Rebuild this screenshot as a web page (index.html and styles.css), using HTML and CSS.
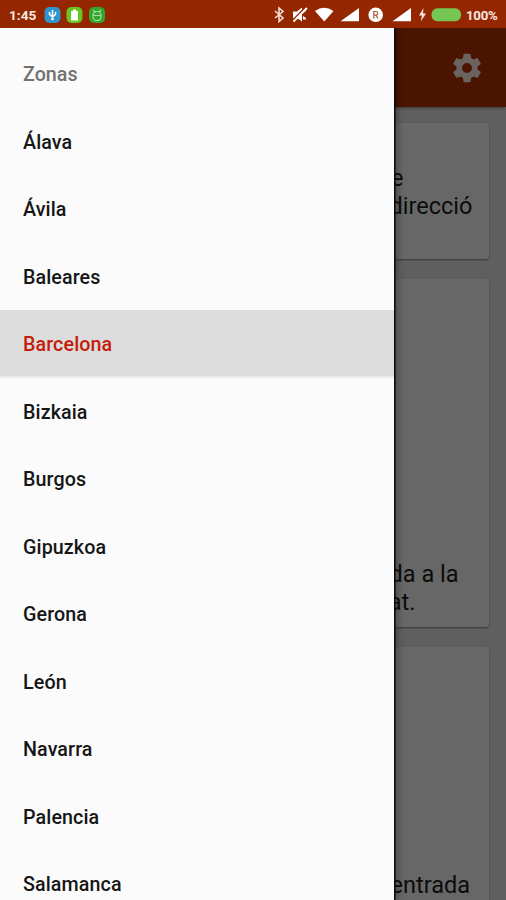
FILE: index.html
```html
<!DOCTYPE html>
<html lang="es">
<head>
<meta charset="utf-8">
<title>Zonas</title>
<link rel="stylesheet" href="styles.css">
</head>
<body>
<div class="screen">
  <header class="status">
    <span class="clock">1:45</span>
    <svg class="status-icons-left" width="64" height="18" viewBox="0 0 64 18">
      <rect x="0.5" y="1" width="16" height="16" rx="5" fill="#3095cf"/>
      <path d="M8.500 4v10M5.500 6v2.500l3 2.500 3-2.500V6" stroke="#fff" stroke-width="1.500" fill="none"/>
      <circle cx="8.500" cy="13" r="1.300" fill="#fff"/>
      <rect x="22.500" y="1" width="16" height="16" rx="5" fill="#69c522"/>
      <path d="M27 5h2V3.500h3V5h2v9.500h-7z" fill="#fff"/>
      <rect x="45" y="1" width="16" height="16" rx="5" fill="#30a82d"/>
      <path d="M49 4l2 2M57 4l-2 2M49 9.500a4 4 0 0 1 8 0v1.500a4 3.500 0 0 1-8 0zM49 9.500h8" stroke="#a9dca0" stroke-width="1.200" fill="none"/>
    </svg>
    <svg class="status-icons-right" width="190" height="18" viewBox="272 6 190 18">
      <path d="M275 11l8 7-4 3.500V8l4 3.500-8 6.500" stroke="#f4ded5" stroke-width="1.600" fill="none"/>
      <path d="M293 11.500h4l5-4v14l-5-3.500h-4zM303 10l3-2v3l-3 2zM303 16l3 2v1.500h-3z" fill="#fff"/>
      <path d="M292.500 20.500L305 7.500" stroke="#952700" stroke-width="1.500"/>
      <path d="M293.500 21.500L307 8" stroke="#fff" stroke-width="1.800"/>
      <path d="M315 11q9-6.500 18.500 0L324.300 21.500z" fill="#fff"/>
      <path d="M340.500 21.300L359 8v13.300z" fill="#fff"/>
      <circle cx="375.700" cy="14.800" r="7.300" fill="#fff"/>
      <path d="M373.800 18.500v-7h2.200a1.800 1.800 0 0 1 0 3.700h-2.200M376 15.200l2 3.300" stroke="#a8563a" stroke-width="1.200" fill="none"/>
      <path d="M392.500 21.300L411 8v13.300z" fill="#fff"/>
      <path d="M423.500 8l-4.500 7.500h3l-1.300 6 5.300-8h-3z" fill="#f8e5dd"/>
      <rect x="431.500" y="8.300" width="29.500" height="13" rx="6" fill="#76c654"/>
    </svg>
    <span class="percent">100%</span>
  </header>
  <div class="stage">
    <div class="page">
      <div class="toolbar">
        <svg width="34" height="34" viewBox="0 0 24 24" fill="#6b6360"><path d="M19.430 12.980c.04-.32.07-.64.07-.98s-.03-.66-.07-.98l2.110-1.650c.19-.15.24-.42.12-.64l-2-3.460c-.12-.22-.39-.3-.61-.22l-2.490 1c-.52-.4-1.080-.73-1.690-.98l-.38-2.650A.488.488 0 0 0 14 2h-4c-.25 0-.46.18-.49.42l-.38 2.650c-.61.25-1.170.59-1.690.98l-2.490-1c-.23-.09-.49 0-.61.22l-2 3.460c-.13.22-.07.49.12.64l2.110 1.650c-.04.32-.07.65-.07.98s.03.66.07.98l-2.110 1.650c-.19.15-.24.42-.12.64l2 3.460c.12.22.39.3.61.22l2.490-1c.52.4 1.080.73 1.690.98l.38 2.650c.03.24.24.42.49.42h4c.25 0 .46-.18.49-.42l.38-2.650c.61-.25 1.170-.59 1.690-.98l2.490 1c.23.09.49 0 .61-.22l2-3.460c.12-.22.07-.49-.12-.64l-2.110-1.650zM12 15.500c-1.930 0-3.500-1.570-3.500-3.500s1.570-3.500 3.500-3.500 3.500 1.570 3.500 3.500-1.570 3.500-3.500 3.500z"/></svg>
      </div>
      <div class="cards">
        <article class="card first"><p class="line narrow">e</p><p class="line">direcció</p></article>
        <article class="card second"><p class="line a-la">da a la</p><p class="line at">at.</p></article>
        <article class="card third"><p class="line entry">entrada</p></article>
      </div>
    </div>
    <nav class="drawer">
      <div class="row heading">Zonas</div>
      <div class="row">Álava</div>
      <div class="row">Ávila</div>
      <div class="row">Baleares</div>
      <div class="row selected">Barcelona</div>
      <div class="row">Bizkaia</div>
      <div class="row">Burgos</div>
      <div class="row">Gipuzkoa</div>
      <div class="row">Gerona</div>
      <div class="row">León</div>
      <div class="row">Navarra</div>
      <div class="row">Palencia</div>
      <div class="row">Salamanca</div>
    </nav>
  </div>
</div>
</body>
</html>
```
FILE: styles.css
```css
* { box-sizing: border-box; }
body { margin: 0; font-family: Roboto, sans-serif; }
.screen { width: 506px; height: 900px; overflow: hidden; display: flex; flex-direction: column; }
.status {
  height: 28px; flex: none; display: flex; align-items: center;
  padding: 2px 8px 0 9px; background: #952700; color: #fbe9e2;
  font-size: 13.7px; font-weight: 700; white-space: nowrap;
}
.status svg { flex: none; }
.clock { width: 35px; flex: none; }
.status-icons-right { margin-left: auto; }
.percent { width: 32px; margin-left: 4px; font-size: 13.2px; letter-spacing: -0.2px; }
.stage { position: relative; flex: 1; overflow: hidden; }
.page { height: 100%; background: #5f5f5f; }
.toolbar {
  height: 79px; display: flex; align-items: center; justify-content: flex-end;
  padding-right: 22px; background: #4b1400; box-shadow: 0 1px 3px rgba(0, 0, 0, 0.4);
}
.cards { display: flex; flex-direction: column; gap: 20px; padding: 16px 17px 0; }
.card {
  flex: none; display: flex; flex-direction: column; align-items: flex-end;
  background: #676767; border-radius: 3px; box-shadow: 0 1px 2px rgba(0, 0, 0, 0.4);
}
.first { height: 136px; padding: 42px 16.5px 0; }
.second { height: 348px; padding: 282px 16.5px 0; }
.third { height: 300px; padding: 225px 17px 0; }
.line { margin: 0; font-size: 23.5px; line-height: 27.5px; color: #0c0c0c; white-space: nowrap; }
.narrow { margin-right: 69px; }
.a-la { margin-right: 14px; }
.at { margin-right: 57px; }
.entry { margin-right: 2px; }
.drawer {
  position: absolute; left: 0; top: 0; bottom: 0; width: 394px; padding-top: 12px;
  background: #fbfbfb; box-shadow: 1.5px 0 0 #0b0b0b, 2px 0 8px rgba(0, 0, 0, 0.45);
}
.row {
  height: 67.5px; display: flex; align-items: center; padding: 2px 23px 0;
  font-size: 19.69px; font-weight: 500; letter-spacing: 0.1px; color: #161616;
}
.heading { color: #717171; letter-spacing: 0; }
.selected { background: linear-gradient(#dcdcdc 66.5px, #ececec 66.5px); color: #c41c0b; }
```
